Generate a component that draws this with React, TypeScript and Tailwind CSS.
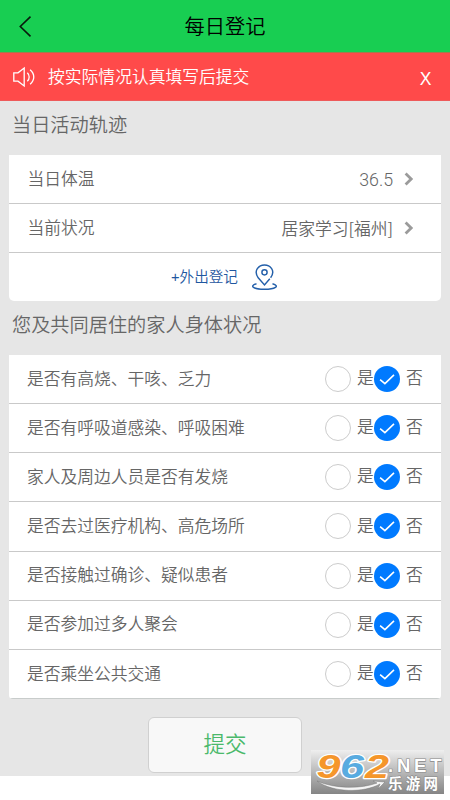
import React from 'react';

const questions = [
  '是否有高烧、干咳、乏力',
  '是否有呼吸道感染、呼吸困难',
  '家人及周边人员是否有发烧',
  '是否去过医疗机构、高危场所',
  '是否接触过确诊、疑似患者',
  '是否参加过多人聚会',
  '是否乘坐公共交通',
];

function Chevron() {
  return (
    <svg className="ml-[11px] h-[14px] w-[10px]" viewBox="0 0 10 14" fill="none" stroke="#9b9b9b" strokeWidth="2.8">
      <path d="M1.6 1.5 7.2 7 1.6 12.5" />
    </svg>
  );
}

function Row({ label, value }: { label: string; value: string }) {
  return (
    <div className="flex h-[49px] items-center border-b-[1px] border-[#c9c9c9] pr-[27px] pl-[18.5px] text-[16.75px]">
      <span className="flex-1 pt-[2px]">{label}</span>
      {/^[\d.]+$/.test(value) ? (
        <span className="pt-[1px] font-['Roboto',sans-serif] text-[17.8px]">{value}</span>
      ) : (
        <span className="font-['Noto_Sans_CJK_SC',sans-serif]">{value}</span>
      )}
      <Chevron />
    </div>
  );
}

function Question({ text }: { text: string }) {
  return (
    <div className="flex h-[49.15px] items-center border-b-[1px] border-[#c9c9c9] pl-[18px] text-[16.75px] last:border-[#c8cccb]">
      <span className="flex-1 pt-[2px]">{text}</span>
      <span className="size-[26px] shrink-0 rounded-full border border-[#cccccc]" />
      <span className="w-[23px] pt-[1px] pl-[6px] whitespace-nowrap">是</span>
      <svg className="size-[26px] shrink-0" viewBox="0 0 26 26">
        <circle cx="13" cy="13" r="13" fill="#007aff" />
        <path d="M6.1 13.6 10.9 17.6 20 8.9" fill="none" stroke="#fff" strokeWidth="1.6" />
      </svg>
      <span className="w-[41px] pt-[1px] pl-[6px]">否</span>
    </div>
  );
}

function Watermark() {
  return (
    <div className="absolute top-[750px] left-[311px] h-[44px] w-[133px] bg-gradient-to-b from-[#efefef] to-[#858585]">
      <svg className="size-full overflow-visible" viewBox="0 0 133 44">
        <g fontFamily="'Liberation Sans', Arial, sans-serif" fontWeight="bold" fontStyle="italic" fontSize="34" stroke="#fff" strokeWidth="2.5" paintOrder="stroke" strokeLinejoin="round">
          <text x="5.5" y="27.5" textLength="24" lengthAdjust="spacingAndGlyphs" fill="#f5962b">9</text>
          <text x="29" y="27.5" textLength="24" lengthAdjust="spacingAndGlyphs" fill="#58abe0">6</text>
          <text x="54" y="27.5" textLength="24" lengthAdjust="spacingAndGlyphs" fill="#f5962b">2</text>
        </g>
        <path d="M6 31C22 43 53 43 69 34L67 39 74 32 62 31 66 33C50 39 24 39 6 31Z" fill="#f5f5f5" stroke="#777" strokeWidth=".5" />
        <g fill="#fff" stroke="#888" strokeWidth="1.2" paintOrder="stroke" fontWeight="bold">
          <text x="77" y="22" fontFamily="'Liberation Sans', Arial, sans-serif" fontSize="18.5" textLength="53.5" lengthAdjust="spacing">.NET</text>
          <text x="77" y="39" fontFamily="'Noto Sans CJK SC', sans-serif" fontSize="14.5" textLength="50" lengthAdjust="spacing">乐游网</text>
        </g>
      </svg>
    </div>
  );
}

export default function App() {
  return (
    <div className="relative h-[800px] w-[450px] overflow-hidden bg-white font-['Liberation_Sans','Noto_Sans_CJK_SC',sans-serif] leading-none font-[350] text-[#666]">
      <div className="h-[776px] bg-[#e6e6e6]">
        <header className="grid h-[53px] grid-cols-[50px_1fr_50px] items-center border-b border-[#a37b4b] bg-[#18ce52] text-black">
          <svg className="ml-[19px] h-[22px] w-[13px]" viewBox="0 0 13 22" fill="none" stroke="#071b0c" strokeWidth="1.6">
            <path d="M11.5 1.7 1.3 11.5 11.5 21.3" />
          </svg>
          <h1 className="pt-[2px] text-center text-[20.25px]">每日登记</h1>
        </header>
        <div className="flex h-[48px] items-center border-b border-[#ee5a5a] bg-[#ff4a4a] pr-[18.5px] pl-[13px] text-[16.8px] text-white">
          <svg className="h-[22px] w-[22px]" viewBox="0 0 22 22" fill="none" stroke="#fff" strokeWidth="1.3">
            <path d="M.8 6.8H5L11.2 2V20L5 15.2H.8ZM14.3 6.8C16.8 9 16.8 13 14.3 15.2M17.1 3.8C22 8 22 14 17.1 18.2" />
          </svg>
          <span className="flex-1 pt-[3px] pl-[13px]">按实际情况认真填写后提交</span>
          <span className="pt-[7px] text-[17.5px]">X</span>
        </div>
        <h2 className="flex h-[54px] items-center pb-[5px] pl-[12px] text-[19.2px]">当日活动轨迹</h2>
        <section className="mx-[9px] h-[146px] overflow-hidden rounded-b-[5px] bg-white">
          <Row label="当日体温" value="36.5" />
          <Row label="当前状况" value="居家学习[福州]" />
          <div className="flex h-[48px] items-center justify-center text-[14.6px] text-[#1f57a0]">
            <span className="pt-[1px]">+外出登记</span>
            <svg className="mr-[1px] ml-[13px] h-[27px] w-[27px]" viewBox="0 0 27 27" fill="none" stroke="#2460aa" strokeWidth="1.45">
              <path d="M18.8 14.8 13.5 21 7.2 13.8C2 6.5 8 1 13.5 1S25 6.5 19.6 13.700" />
              <circle cx="13.5" cy="8.3" r="2.6" />
              <path d="M5.5 19.7C-2.5 22 3 25.3 13.5 25.3S29.5 22 21.5 19.7" />
            </svg>
          </div>
        </section>
        <h2 className="flex h-[54px] items-center pb-[4px] pl-[12px] text-[19.2px]">您及共同居住的家人身体状况</h2>
        <section className="mx-[9px] h-[344px] overflow-hidden rounded-b-[4px] bg-white">
          {questions.map((text) => <Question key={text} text={text} />)}
        </section>
        <button className="mx-auto mt-[18px] flex h-[56px] w-[154px] items-center justify-center rounded-[6px] border border-[#d0d0d0] bg-[#f8f8f8] pt-[2px] text-[21.5px] text-[#4bb96b]">提交</button>
      </div>
      <Watermark />
    </div>
  );
}
